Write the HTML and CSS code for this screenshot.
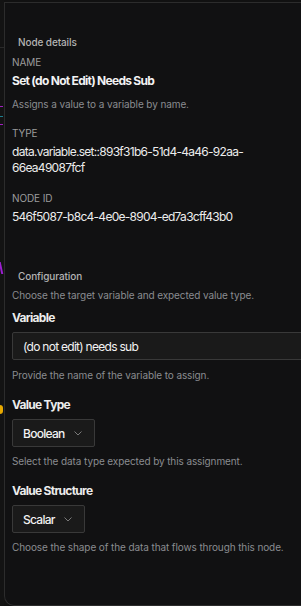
FILE: index.html
```html
<!DOCTYPE html>
<html lang="en">
<head>
    <meta charset="UTF-8">
    <meta name="viewport" content="width=device-width, initial-scale=1.0">
    <title>Node details</title>
    <link rel="stylesheet" href="styles.css">
</head>
<body>
    <div class="layout">
        <div class="canvas">
            <span class="grid-line grid-a"></span>
            <span class="edge edge-purple-a"></span>
            <span class="edge edge-teal"></span>
            <span class="edge edge-purple-b"></span>
            <span class="edge edge-purple-c"></span>
            <span class="port port-yellow"></span>
        </div>

        <aside class="panel">
            <section class="section details">
                <h2 class="section-title">Node details</h2>

                <div class="field">
                    <div class="field-label">Name</div>
                    <div class="node-name">Set (do Not Edit) Needs Sub</div>
                    <p class="hint">Assigns a value to a variable by name.</p>
                </div>

                <div class="field">
                    <div class="field-label">Type</div>
                    <div class="field-value">data.variable.set::893f31b6-51d4-4a46-92aa-66ea49087fcf</div>
                </div>

                <div class="field">
                    <div class="field-label">Node ID</div>
                    <div class="field-value">546f5087-b8c4-4e0e-8904-ed7a3cff43b0</div>
                </div>
            </section>

            <section class="section config">
                <h2 class="section-title">Configuration</h2>
                <p class="hint">Choose the target variable and expected value type.</p>

                <div class="control">
                    <label class="control-label" for="variableName">Variable</label>
                    <input class="text-input" id="variableName" type="text" value="(do not edit) needs sub">
                    <p class="hint">Provide the name of the variable to assign.</p>
                </div>

                <div class="control">
                    <div class="control-label">Value Type</div>
                    <button class="select" type="button">
                        <span>Boolean</span>
                        <svg class="chevron" width="8" height="5" viewBox="0 0 8 5"><path d="M0.5 0.5 L4 4 L7.5 0.5" fill="none" stroke="currentColor" stroke-width="1"/></svg>
                    </button>
                    <p class="hint">Select the data type expected by this assignment.</p>
                </div>

                <div class="control">
                    <div class="control-label">Value Structure</div>
                    <button class="select" type="button">
                        <span>Scalar</span>
                        <svg class="chevron" width="8" height="5" viewBox="0 0 8 5"><path d="M0.5 0.5 L4 4 L7.5 0.5" fill="none" stroke="currentColor" stroke-width="1"/></svg>
                    </button>
                    <p class="hint">Choose the shape of the data that flows through this node.</p>
                </div>
            </section>
        </aside>
    </div>
</body>
</html>
```

FILE: styles.css
```css
:root {
    --bg-color: #111111;
    --panel-color: #111112;
    --border-color: #2c2c2c;
    --input-color: #1a1a1a;
    --input-border: #393939;
    --text-color: #f2f2f2;
    --label-color: #9c9c9c;
    --hint-color: #8a8c90;
}

* {
    margin: 0;
    padding: 0;
    box-sizing: border-box;
}

body {
    font-family: 'Inter', 'Liberation Sans', sans-serif;
    letter-spacing: -0.045em;
    background-color: var(--bg-color);
    color: var(--text-color);
    overflow: hidden;
}

.layout {
    display: flex;
    height: 606px;
    padding-top: 2px;
}

/* 뒤쪽 캔버스 가장자리 */
.canvas {
    position: relative;
    width: 4px;
    flex-shrink: 0;
    margin-top: -2px;
    background-color: #131313;
}

.grid-line {
    position: absolute;
    left: 0;
    width: 4px;
    height: 1px;
    background-color: #2a2a2a;
}

.grid-a { top: 47px; }

.edge {
    position: absolute;
    left: 0;
    width: 3px;
    height: 1px;
}

.edge-purple-a { top: 106px; background-color: #a020c0; }
.edge-teal { top: 116px; background-color: #1d7f8f; }
.edge-purple-b { top: 124px; background-color: #a020c0; }
.edge-purple-c { top: 262px; width: 2px; height: 12px; background-color: #9b1fd0; transform: skewX(12deg); }

.port {
    position: absolute;
    left: 0;
    top: 405px;
    width: 3px;
    height: 9px;
    border-radius: 0 4px 4px 0;
    background-color: #e8a900;
}

.panel {
    flex: 1;
    min-width: 0;
    background-color: var(--panel-color);
    border-top: 1px solid var(--border-color);
    border-left: 1px solid var(--border-color);
    border-bottom: 1px solid var(--border-color);
    border-bottom-left-radius: 10px;
    padding: 0 0 0 7px;
}

.section-title {
    font-size: 10px;
    font-weight: 500;
    line-height: 14px;
    letter-spacing: -0.01em;
    color: #b4b4b4;
    padding-left: 6px;
}

.details {
    padding-top: 32px;
}

.details .section-title {
    margin-bottom: 6px;
}

.field {
    margin-bottom: 15px;
}

.field-label {
    font-size: 10px;
    line-height: 14px;
    letter-spacing: -0.01em;
    text-transform: uppercase;
    color: var(--label-color);
    margin-bottom: 4px;
}

.node-name {
    font-size: 12px;
    font-weight: 700;
    line-height: 16px;
    color: var(--text-color);
    margin-bottom: 8px;
}

.field-value {
    font-size: 12px;
    line-height: 16px;
    color: #ececec;
    padding-right: 12px;
    overflow-wrap: anywhere;
}

.hint {
    font-size: 10px;
    line-height: 14px;
    letter-spacing: -0.01em;
    color: var(--hint-color);
}

.config {
    padding-top: 29px;
}

.config .section-title {
    margin-bottom: 5px;
}

.control {
    margin-top: 8px;
}

.control + .control {
    margin-top: 15px;
}

.control-label {
    display: block;
    font-size: 12px;
    font-weight: 700;
    line-height: 16px;
    color: #ececec;
    margin-bottom: 6px;
}

.text-input {
    display: block;
    width: calc(100% + 10px);
    height: 28px;
    padding: 0 10px;
    font-family: inherit;
    font-size: 12px;
    letter-spacing: inherit;
    color: var(--text-color);
    background-color: var(--input-color);
    border: 1px solid var(--input-border);
    border-radius: 2px;
    margin-bottom: 8px;
    outline: none;
}

.select {
    display: inline-flex;
    align-items: center;
    gap: 9px;
    height: 28px;
    padding: 0 12px 0 10px;
    font-family: inherit;
    font-size: 12px;
    font-weight: 500;
    letter-spacing: inherit;
    color: var(--text-color);
    background-color: var(--input-color);
    border: 1px solid var(--input-border);
    border-radius: 2px;
    margin-bottom: 7px;
    cursor: pointer;
}

.chevron {
    color: #7a7a7a;
}
```
